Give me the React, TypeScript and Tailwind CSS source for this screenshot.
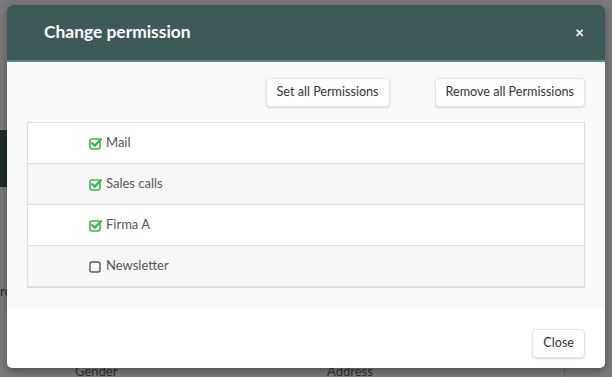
import React from 'react';

const permissions = [
  { name: 'Mail', checked: true },
  { name: 'Sales calls', checked: true },
  { name: 'Firma A', checked: true },
  { name: 'Newsletter', checked: false },
];

const CheckIcon: React.FC<{ checked: boolean }> = ({ checked }) =>
  checked ? (
    <svg width="13" height="13" viewBox="0 0 13 13" className="shrink-0">
      <rect x="1" y="2" width="10" height="10" rx="2" fill="none" stroke="#3fb34f" strokeWidth="1.6" />
      <path d="M3.3 6.2 L5.8 8.6 L12 2.2" fill="none" stroke="#3fb34f" strokeWidth="2.2" strokeLinecap="square" />
    </svg>
  ) : (
    <svg width="13" height="13" viewBox="0 0 13 13" className="shrink-0">
      <rect x="1" y="2" width="10" height="10" rx="2" fill="none" stroke="#555" strokeWidth="1.4" />
    </svg>
  );

const Btn: React.FC<{ children: React.ReactNode }> = ({ children }) => (
  <button className="h-[29px] rounded-[4px] border border-[#e4e4e4] bg-white px-[10px] text-[12.6px] text-[#333] shadow-[0_1px_2px_rgba(0,0,0,0.15)]">
    {children}
  </button>
);

export default function App() {
  return (
    <div className="relative h-[377px] w-[612px] overflow-hidden bg-[#7a7a7a] font-['Lato',sans-serif]">
      {/* page behind the overlay */}
      <div className="absolute left-0 top-[130px] h-[57px] w-[10px] bg-[#1e2f2d]" />
      <div className="absolute left-0 top-[282px] text-[13px] text-[#222]">ro</div>
      <div className="absolute left-[75px] top-[365px] text-[13px] leading-none text-[#2b2b2b]">Gender</div>
      <div className="absolute left-[327px] top-[365px] text-[13px] leading-none text-[#2b2b2b]">Address</div>
      <div className="absolute left-[564px] top-[360px] h-[20px] w-px bg-[#666]" />

      {/* modal */}
      <div className="absolute left-[7px] top-[5px] flex h-[363px] w-[598px] flex-col overflow-hidden rounded-[5px] bg-white shadow-[0_3px_8px_rgba(0,0,0,0.35)]">
        <div className="flex h-[57px] shrink-0 items-center justify-between border-b-2 border-[#5b8784] bg-[#3c5a57] pl-[37px] pr-[21px]">
          <h2 className="text-[17.4px] font-bold text-white">Change permission</h2>
          <span className="text-[15px] font-bold leading-none text-white">×</span>
        </div>

        <div className="flex h-[246px] shrink-0 flex-col bg-[#f9f9f9] px-[20px] pt-[16px]">
          <div className="flex justify-end gap-[45px]">
            <Btn>Set all Permissions</Btn>
            <Btn>Remove all Permissions</Btn>
          </div>
          <div className="mt-[15px] border border-b-2 border-[#dddddd]">
            {permissions.map((p, i) => (
              <div
                key={p.name}
                className={`flex items-center gap-[4px] pl-[61px] text-[13px] text-[#555] ${i > 0 ? 'h-[41px] border-t border-[#dddddd]' : 'h-[40px]'} ${i % 2 === 1 ? 'bg-[#f8f8f8]' : 'bg-white'}`}
              >
                <CheckIcon checked={p.checked} />
                <span>{p.name}</span>
              </div>
            ))}
          </div>
        </div>

        <div className="flex flex-1 items-start justify-end px-[20px] pt-[21px]">
          <Btn>Close</Btn>
        </div>
      </div>
    </div>
  );
}
